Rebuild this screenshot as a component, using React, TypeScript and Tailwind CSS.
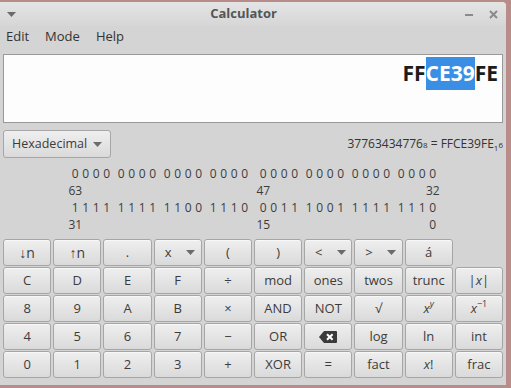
import type { ReactNode } from "react";

const Caret = ({ className = "" }: { className?: string }) => (
  <svg width="9" height="5" viewBox="0 0 9 5" className={className}>
    <path d="M0 0h9L4.5 5z" fill="#6b6b6b" />
  </svg>
);

const Backspace = () => (
  <svg width="18" height="12" viewBox="0 0 18 12">
    <path d="M5 0h12a1 1 0 0 1 1 1v10a1 1 0 0 1-1 1H5L0 6z" fill="#3a3a3a" />
    <path d="M8 3.2l5.6 5.6M13.6 3.2L8 8.8" stroke="#ffffff" strokeWidth="2" />
  </svg>
);

const Btn = ({ children }: { children?: ReactNode }) => (
  <div className="flex h-[27px] items-center justify-center rounded-[3px] border border-[#a6a6a6] bg-linear-to-b from-[#efefef] to-[#dadada] text-[13px] text-[#3c3c3c] shadow-[inset_0_1px_0_#f8f8f8]">
    {children}
  </div>
);

const WithCaret = ({ label }: { label: string }) => (
  <span className="flex items-center gap-[14px] pl-[4px]">
    <span>{label}</span>
    <Caret />
  </span>
);

const X = () => <span className="italic">x</span>;

const buttons: ReactNode[] = [
  <span className="text-[14px]">↓n</span>, <span className="text-[14px]">↑n</span>, <>.</>, <WithCaret label="x" />, <>(</>, <>)</>, <WithCaret label="<" />, <WithCaret label=">" />, <>á</>, null,
  <>C</>, <>D</>, <>E</>, <>F</>, <>÷</>, <>mod</>, <>ones</>, <>twos</>, <>trunc</>, <>|<X />|</>,
  <>8</>, <>9</>, <>A</>, <>B</>, <>×</>, <>AND</>, <>NOT</>, <>√</>,
  <><X /><sup className="text-[9px] italic">y</sup></>,
  <><X /><sup className="text-[9px]">−1</sup></>,
  <>4</>, <>5</>, <>6</>, <>7</>, <>−</>, <>OR</>, <Backspace />, <>log</>, <>ln</>, <>int</>,
  <>0</>, <>1</>, <>2</>, <>3</>, <>+</>, <>XOR</>, <>=</>, <>fact</>, <><X />!</>, <>frac</>,
];

const hi = "00000000000000000000000000000000";
const lo = "11111111110011100011100111111110";

const BitRow = ({ cells }: { cells: string[] }) => (
  <div className="ml-[70px] flex h-[17px] w-[368px] items-center">
    {[0, 1, 2, 3, 4, 5, 6, 7].map((n) => (
      <div
        key={n}
        className={`flex ${n === 4 ? "ml-[8px]" : n > 0 ? "ml-[4px]" : ""}`}
      >
        {[0, 1, 2, 3].map((i) => (
          <div key={i} className="flex w-[10.5px] justify-center whitespace-nowrap">
            {cells[n * 4 + i]}
          </div>
        ))}
      </div>
    ))}
  </div>
);

const marks = (a: string, b: string, c: string) => {
  const arr = Array(32).fill("");
  arr[0] = a;
  arr[16] = b;
  arr[31] = c;
  return arr;
};

export default function App() {
  return (
    <div
      className="h-[388px] w-[511px] overflow-hidden bg-[#b88c88] pt-[2px]"
      style={{ fontFamily: '"Open Sans", "Noto Sans", sans-serif' }}
    >
      <div className="flex h-[383px] w-[506px] flex-col rounded-tr-[4px] bg-[#d4d4d4] text-[#3c3c3c]">
        {/* title bar */}
        <div className="flex h-[24px] items-center rounded-tr-[4px] bg-linear-to-b from-[#e4e4e4] to-[#d6d6d6] px-[7px]">
          <Caret />
          <div className="flex-1 pl-[6px] text-center text-[13px] font-bold text-[#555555]">
            Calculator
          </div>
          <span className="mr-[16px] mt-[1px] h-[2px] w-[8px] bg-[#8a8a8a]" />
          <svg width="9" height="9" viewBox="0 0 9 9" className="mr-[1px]">
            <path d="M1 1l7 7M8 1L1 8" stroke="#8a8a8a" strokeWidth="2" />
          </svg>
        </div>

        {/* menu */}
        <div className="flex h-[22px] items-center gap-[16px] px-[6px] text-[13px] text-[#333333]">
          <span>Edit</span>
          <span>Mode</span>
          <span>Help</span>
        </div>

        {/* display */}
        <div className="mx-[3px] mt-[6px] flex h-[69px] items-start justify-end border border-[#999999] bg-[#fdfdfd] pr-[4px] pt-[2px]">
          <div className="flex h-[33px] items-center text-[21px] font-bold text-[#1c1c1c]">
            <span>FF</span>
            <span className="flex h-full items-center bg-[#3a8fe4] text-white">CE39</span>
            <span>FE</span>
          </div>
        </div>

        {/* base selector + conversion */}
        <div className="mt-[7px] flex items-center justify-between px-[3px]">
          <div className="flex h-[28px] w-[108px] items-center justify-between rounded-[3px] border border-[#a6a6a6] bg-linear-to-b from-[#efefef] to-[#dadada] pl-[8px] pr-[8px] text-[12.5px]">
            <span>Hexadecimal</span>
            <Caret />
          </div>
          <div className="text-[12px] text-[#333333]">
            37763434776<span className="text-[8px]">8</span> = FFCE39FE
            <span className="relative top-[3px] text-[8px]">1</span>
            <span className="text-[8px]">6</span>
          </div>
        </div>

        {/* bit panel */}
        <div className="mt-[7px] text-[12px] text-[#3c3c3c]">
          <BitRow cells={hi.split("")} />
          <BitRow cells={marks("63", "47", "32")} />
          <BitRow cells={lo.split("")} />
          <BitRow cells={marks("31", "15", "0")} />
        </div>

        {/* keypad */}
        <div className="ml-[3px] mt-[6px] grid w-[500px] grid-cols-10 gap-x-[2px] gap-y-px">
          {buttons.map((b, i) =>
            b === null ? <div key={i} /> : <Btn key={i}>{b}</Btn>
          )}
        </div>
      </div>
    </div>
  );
}
